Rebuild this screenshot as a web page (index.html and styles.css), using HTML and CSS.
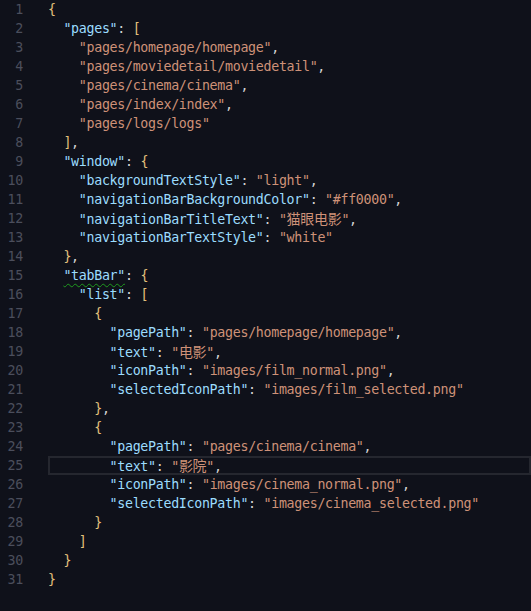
FILE: index.html
```html
<!DOCTYPE html>
<html lang="zh">
<head>
  <meta charset="UTF-8" />
  <title>app.json</title>
  <link rel="stylesheet" href="styles.css">
</head>
<body>
  <div class="editor">
    <div class="line"><span class="num">1</span><span class="code"><span class="br">{</span></span></div>
    <div class="line"><span class="num">2</span><span class="code">  <span class="key">"pages"</span>: <span class="br">[</span></span></div>
    <div class="line"><span class="num">3</span><span class="code">    <span class="str">"pages/homepage/homepage"</span>,</span></div>
    <div class="line"><span class="num">4</span><span class="code">    <span class="str">"pages/moviedetail/moviedetail"</span>,</span></div>
    <div class="line"><span class="num">5</span><span class="code">    <span class="str">"pages/cinema/cinema"</span>,</span></div>
    <div class="line"><span class="num">6</span><span class="code">    <span class="str">"pages/index/index"</span>,</span></div>
    <div class="line"><span class="num">7</span><span class="code">    <span class="str">"pages/logs/logs"</span></span></div>
    <div class="line"><span class="num">8</span><span class="code">  <span class="br">]</span>,</span></div>
    <div class="line"><span class="num">9</span><span class="code">  <span class="key">"window"</span>: <span class="br">{</span></span></div>
    <div class="line"><span class="num">10</span><span class="code">    <span class="key">"backgroundTextStyle"</span>: <span class="str">"light"</span>,</span></div>
    <div class="line"><span class="num">11</span><span class="code">    <span class="key">"navigationBarBackgroundColor"</span>: <span class="str">"#ff0000"</span>,</span></div>
    <div class="line"><span class="num">12</span><span class="code">    <span class="key">"navigationBarTitleText"</span>: <span class="str">"<span class="cjk">猫眼电影</span>"</span>,</span></div>
    <div class="line"><span class="num">13</span><span class="code">    <span class="key">"navigationBarTextStyle"</span>: <span class="str">"white"</span></span></div>
    <div class="line"><span class="num">14</span><span class="code">  <span class="br">}</span>,</span></div>
    <div class="line"><span class="num">15</span><span class="code">  <span class="key warn">"tabBar"</span>: <span class="br">{</span></span></div>
    <div class="line"><span class="num">16</span><span class="code">    <span class="key">"list"</span>: <span class="br">[</span></span></div>
    <div class="line"><span class="num">17</span><span class="code">      <span class="br">{</span></span></div>
    <div class="line"><span class="num">18</span><span class="code">        <span class="key">"pagePath"</span>: <span class="str">"pages/homepage/homepage"</span>,</span></div>
    <div class="line"><span class="num">19</span><span class="code">        <span class="key">"text"</span>: <span class="str">"<span class="cjk">电影</span>"</span>,</span></div>
    <div class="line"><span class="num">20</span><span class="code">        <span class="key">"iconPath"</span>: <span class="str">"images/film_normal.png"</span>,</span></div>
    <div class="line"><span class="num">21</span><span class="code">        <span class="key">"selectedIconPath"</span>: <span class="str">"images/film_selected.png"</span></span></div>
    <div class="line"><span class="num">22</span><span class="code">      <span class="br">}</span>,</span></div>
    <div class="line"><span class="num">23</span><span class="code">      <span class="br">{</span></span></div>
    <div class="line"><span class="num">24</span><span class="code">        <span class="key">"pagePath"</span>: <span class="str">"pages/cinema/cinema"</span>,</span></div>
    <div class="line current"><span class="num">25</span><span class="code">        <span class="key">"text"</span>: <span class="str">"<span class="cjk">影院</span>"</span>,</span></div>
    <div class="line"><span class="num">26</span><span class="code">        <span class="key">"iconPath"</span>: <span class="str">"images/cinema_normal.png"</span>,</span></div>
    <div class="line"><span class="num">27</span><span class="code">        <span class="key">"selectedIconPath"</span>: <span class="str">"images/cinema_selected.png"</span></span></div>
    <div class="line"><span class="num">28</span><span class="code">      <span class="br">}</span></span></div>
    <div class="line"><span class="num">29</span><span class="code">    <span class="br">]</span></span></div>
    <div class="line"><span class="num">30</span><span class="code">  <span class="br">}</span></span></div>
    <div class="line"><span class="num">31</span><span class="code"><span class="br">}</span></span></div>
  </div>
</body>
</html>
```

FILE: styles.css
```css
* {
  box-sizing: border-box;
  margin: 0;
  padding: 0;
}

body {
  background-color: #0f111a;
  color: #d4d4d4;
  font-family: 'DejaVu Sans Mono', 'Liberation Mono', monospace;
  font-size: 13.3px;
  letter-spacing: -0.31px;
  overflow: hidden;
}

.editor {
  display: flex;
  flex-direction: column;
  height: 611px;
}

.line {
  display: flex;
  height: 19px;
  line-height: 19px;
  white-space: pre;
}

.num {
  width: 23px;
  text-align: right;
  color: #4b4e5c;
  flex-shrink: 0;
}

.code {
  flex: 1;
  margin-left: 25px;
}

.line.current .code {
  box-shadow: inset 0 0 0 2px #25272f;
}

.key {
  color: #9cdcfe;
}

.str {
  color: #ce9178;
}

.br {
  color: #e2c07c;
}

.cjk {
  font-family: 'Noto Sans CJK SC', sans-serif;
  font-size: 14px;
}

.warn {
  text-decoration: underline wavy #1e9a1e;
  text-decoration-thickness: 1px;
  text-underline-offset: 3px;
}
```
